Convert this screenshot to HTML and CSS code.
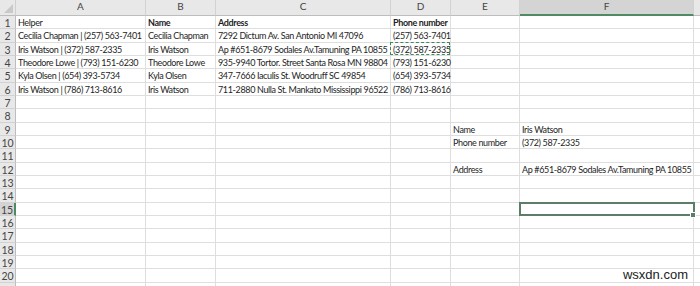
FILE: index.html
```html
<!DOCTYPE html>
<html lang="en">
<head>
  <meta charset="UTF-8">
  <title>Contacts - Sheet1</title>
  <link rel="stylesheet" href="styles.css">
</head>
<body>
  <div class="sheet" id="sheet"></div>
  <div class="watermark">wsxdn.com</div>

  <script>
    const cols = ['A', 'B', 'C', 'D', 'E', 'F'];
    const rowCount = 21;
    const visibleRows = 20; // row 21 is only partly in view
    const activeCol = 'F';
    const activeRow = 15;

    // Cell contents keyed by address
    const cells = {
      A1: 'Helper', B1: 'Name', C1: 'Address', D1: 'Phone number',
      A2: 'Cecilia Chapman | (257) 563-7401', B2: 'Cecilia Chapman', C2: '7292 Dictum Av. San Antonio MI 47096', D2: '(257) 563-7401',
      A3: 'Iris Watson | (372) 587-2335', B3: 'Iris Watson', C3: 'Ap #651-8679 Sodales Av.Tamuning PA 10855', D3: '(372) 587-2335',
      A4: 'Theodore Lowe | (793) 151-6230', B4: 'Theodore Lowe', C4: '935-9940 Tortor. Street Santa Rosa MN 98804', D4: '(793) 151-6230',
      A5: 'Kyla Olsen | (654) 393-5734', B5: 'Kyla Olsen', C5: '347-7666 Iaculis St. Woodruff SC 49854', D5: '(654) 393-5734',
      A6: 'Iris Watson | (786) 713-8616', B6: 'Iris Watson', C6: '711-2880 Nulla St. Mankato Mississippi 96522', D6: '(786) 713-8616',
      E9: 'Name', F9: 'Iris Watson',
      E10: 'Phone number', F10: '(372) 587-2335',
      E12: 'Address', F12: 'Ap #651-8679 Sodales Av.Tamuning PA 10855'
    };
    const bold = ['B1', 'C1', 'D1'];
    const copied = 'D3';

    function cell(cls, text) {
      const div = document.createElement('div');
      div.className = cls;
      if (text) div.textContent = text;
      return div;
    }

    function buildSheet() {
      const sheet = document.getElementById('sheet');
      sheet.appendChild(cell('corner'));
      for (const c of cols) {
        sheet.appendChild(cell('col-head' + (c === activeCol ? ' selected' : ''), c));
      }
      sheet.appendChild(cell('col-head rest'));

      for (let r = 1; r <= rowCount; r++) {
        const label = r <= visibleRows ? String(r) : '';
        sheet.appendChild(cell('row-head' + (r === activeRow ? ' selected' : ''), label));
        for (const c of cols) {
          const addr = c + r;
          let cls = 'cell';
          if (bold.includes(addr)) cls += ' bold';
          if (addr === copied) cls += ' copied';
          if (c === activeCol && r === activeRow) cls += ' active';
          sheet.appendChild(cell(cls, cells[addr]));
        }
        sheet.appendChild(cell('cell rest'));
      }
    }

    buildSheet();
  </script>
</body>
</html>
```

FILE: styles.css
```css
html, body {
  margin: 0;
  height: 100%;
  overflow: hidden;
  background: #fff;
}
body {
  font-family: Lato, "Open Sans", sans-serif;
  font-size: 9px;
  color: #1e1e1e;
  position: relative;
}
.sheet {
  display: grid;
  grid-template-columns: 16px 130px 70px 175px 60px 69px 174px 6px;
  grid-template-rows: 16px repeat(21, 13.333px);
}
.sheet > div {
  box-sizing: border-box;
  white-space: nowrap;
  line-height: 12px;
}
.corner {
  background: #e8e8e8;
  border-right: 1px solid #cfcfcf;
  border-bottom: 1px solid #bdbdbd;
  position: relative;
}
.corner::after {
  content: "";
  position: absolute;
  right: 2px;
  bottom: 2px;
  border-left: 9px solid transparent;
  border-bottom: 9px solid #c9c9c9;
}
.col-head {
  background: #e8e8e8;
  color: #444;
  text-align: center;
  font-size: 10px;
  line-height: 16px;
  border-right: 1px solid #d2d2d2;
  border-bottom: 1px solid #bdbdbd;
}
.col-head.selected {
  background: #d4d4d4;
  border-bottom: 2px solid #4f8a62;
}
.col-head.rest { border-right: none; }
.row-head {
  background: #e8e8e8;
  color: #444;
  text-align: center;
  font-size: 10.5px;
  border-right: 1px solid #bdbdbd;
  border-bottom: 1px solid #d2d2d2;
  padding-top: 1px;
}
.row-head.selected {
  background: #d4d4d4;
  border-right: 2px solid #4f8a62;
}
.cell {
  font-size: 9px;
  border-right: 1px solid #dedede;
  border-bottom: 1px solid #dedede;
  padding: 1px 0 0 2px;
  letter-spacing: -0.36px;
  position: relative;
}
.cell.rest { border-right: none; }
.bold { font-weight: bold; }
.copied::after {
  content: "";
  position: absolute;
  left: -1px;
  top: -1px;
  right: 0;
  bottom: 0;
  border: 1px dashed #3e8a5a;
}
.active::after {
  content: "";
  position: absolute;
  left: -1px;
  top: -1px;
  right: -2px;
  bottom: -1px;
  border: 2px solid #5b7e69;
}
.active::before {
  content: "";
  position: absolute;
  right: -3px;
  bottom: -3px;
  width: 4px;
  height: 4px;
  background: #5b7e69;
  border: 1px solid #fff;
  z-index: 1;
}
.watermark {
  position: absolute;
  right: 12px;
  bottom: 4px;
  font-family: "Liberation Sans", sans-serif;
  font-size: 13px;
  color: #222;
}
```
